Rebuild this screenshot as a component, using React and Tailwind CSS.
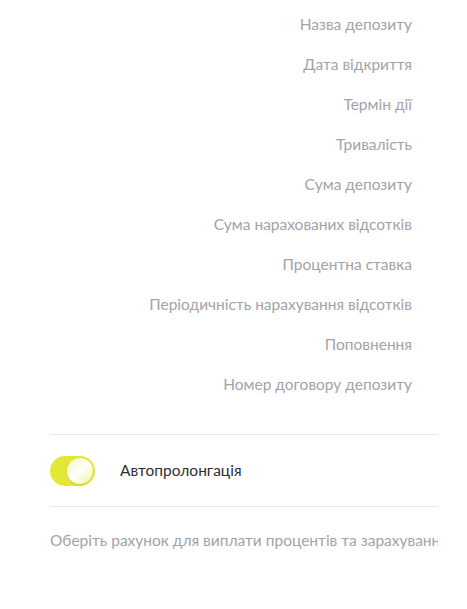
const fields = [
  'Назва депозиту',
  'Дата відкриття',
  'Термін дії',
  'Тривалість',
  'Сума депозиту',
  'Сума нарахованих відсотків',
  'Процентна ставка',
  'Періодичність нарахування відсотків',
  'Поповнення',
  'Номер договору депозиту',
];

export default function App() {
  return (
    <div
      className="min-h-screen bg-white pl-[50px] pr-[29px]"
      style={{ fontFamily: 'Lato, "Noto Sans", sans-serif' }}
    >
      <div className="pt-[5px]">
        {fields.map((f) => (
          <div key={f} className="h-[40px] flex items-center justify-end pr-[26px] text-[15.5px] text-[#a3a3a3]">
            {f}
          </div>
        ))}
      </div>

      <div className="mt-[29px] border-t border-[#e8e8e8]" />

      <div className="h-[71px] flex items-center">
        <div className="w-[45px] h-[30px] rounded-full bg-[#e3e836] flex items-center justify-end pr-[2px]">
          <div className="w-[26px] h-[26px] rounded-full bg-gradient-to-br from-[#f4f7b8] via-white to-[#eef28a] shadow-sm" />
        </div>
        <span className="ml-[25px] text-[15.5px] text-[#2e2e2e]">Автопролонгація</span>
      </div>

      <div className="border-t border-[#e8e8e8]" />

      <div className="pt-[22px] overflow-hidden whitespace-nowrap text-[15.5px] text-[#a3a3a3]">
        Оберіть рахунок для виплати процентів та зарахування суми депозиту
      </div>
    </div>
  );
}
